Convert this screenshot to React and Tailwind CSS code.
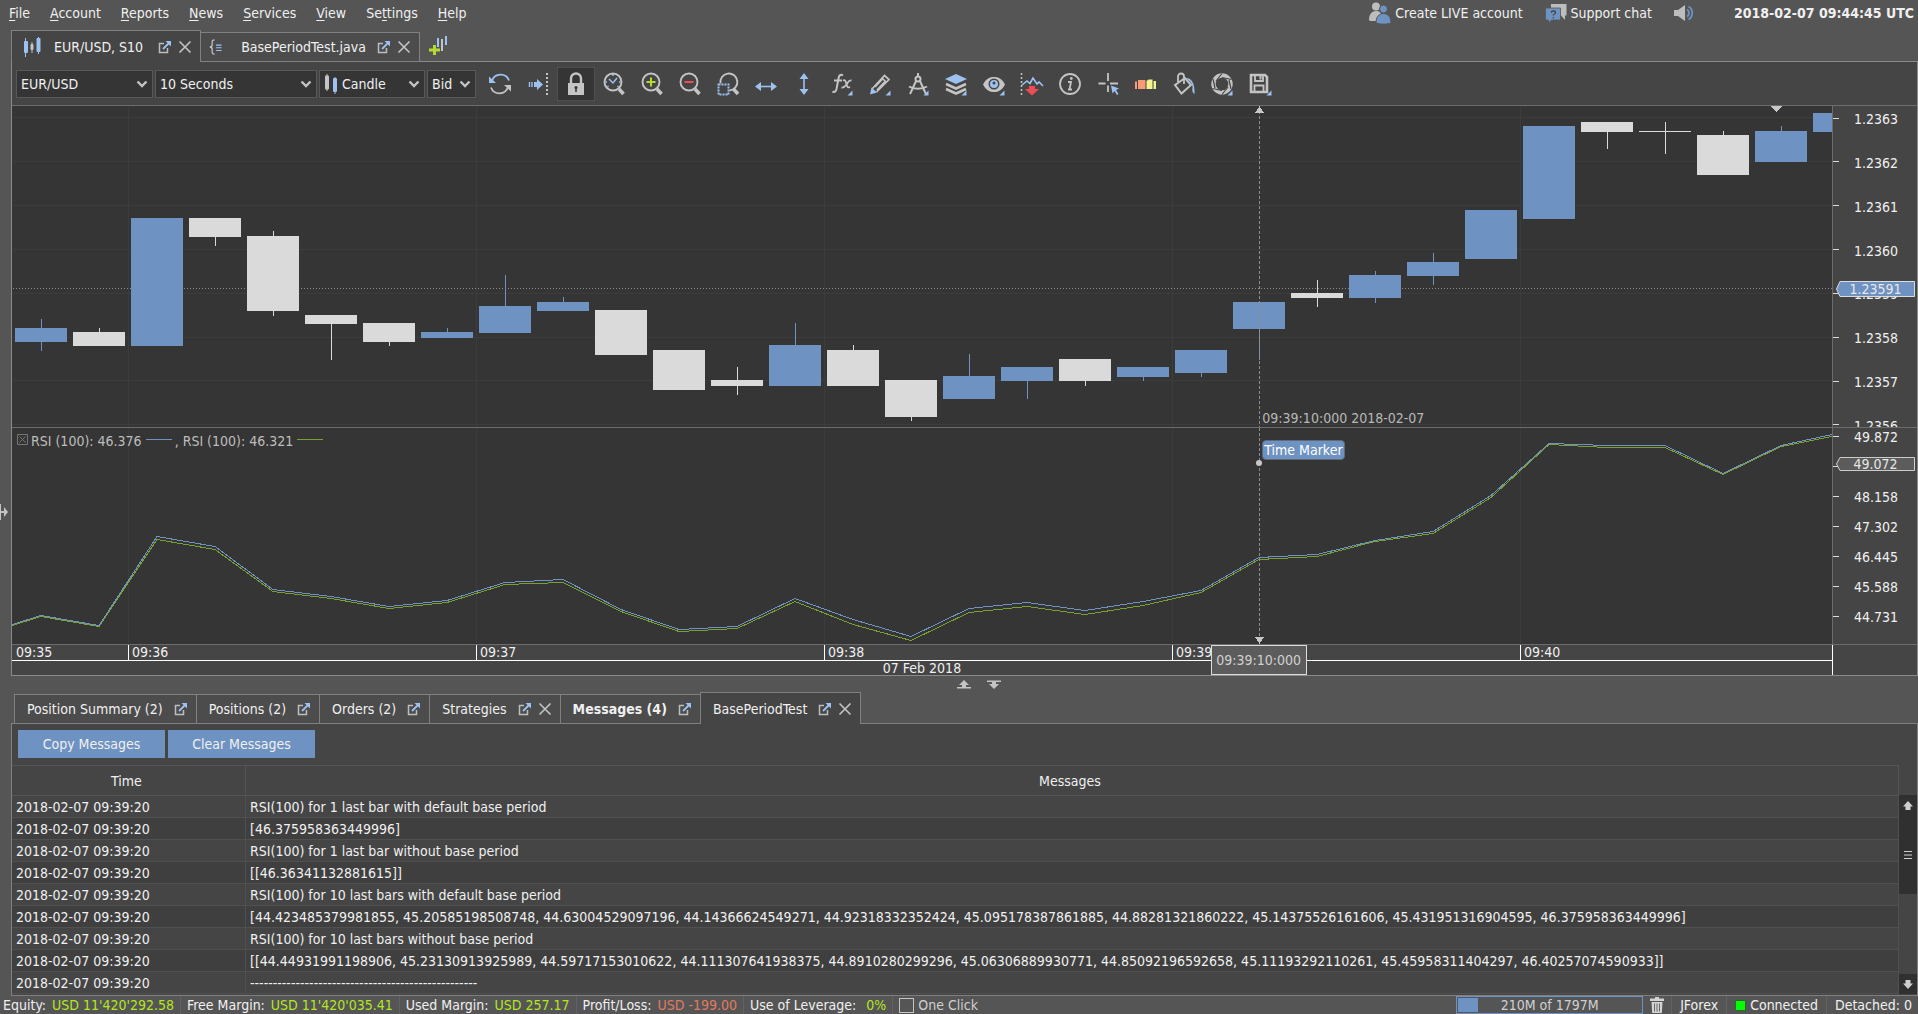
import { useState } from "react";
import { twMerge } from "tailwind-merge";

const BLUE = "#9dc1f0";
const GRAY = "#c4c4c4";

const menuItems = [
    ["", "F", "ile"],
    ["", "A", "ccount"],
    ["", "R", "eports"],
    ["", "N", "ews"],
    ["", "S", "ervices"],
    ["", "V", "iew"],
    ["Se", "t", "tings"],
    ["", "H", "elp"],
];

// [top, bottom, high, low, up]
const candles = [
    [222, 236, 213, 245, true],
    [226, 240, 222, 240, false],
    [112, 240, 112, 240, true],
    [112, 131, 112, 140, false],
    [130, 205, 125, 210, false],
    [209, 218, 209, 254, false],
    [217, 236, 217, 240, false],
    [226, 232, 222, 232, true],
    [200, 227, 169, 227, true],
    [196, 205, 191, 205, true],
    [204, 249, 204, 249, false],
    [244, 284, 244, 284, false],
    [274, 280, 261, 289, false],
    [239, 280, 217, 280, true],
    [244, 280, 239, 280, false],
    [274, 311, 274, 315, false],
    [270, 293, 248, 293, true],
    [261, 275, 261, 293, true],
    [253, 275, 253, 280, false],
    [261, 271, 261, 275, true],
    [244, 267, 244, 271, true],
    [196, 223, 196, 254, true],
    [187, 192, 174, 201, false],
    [169, 192, 165, 197, true],
    [156, 170, 147, 179, true],
    [104, 153, 104, 153, true],
    [20, 113, 20, 113, true],
    [16, 26, 16, 43, false],
    [25, 26, 16, 48, false],
    [29, 69, 25, 69, false],
    [25, 56, 20, 56, true],
    [7, 26, 7, 26, true],
];

const priceGrid = [11, 55, 99, 143, 187, 231, 274, 318];
const timeGrid = [116, 464, 812, 1160, 1508];
const prices = ["1.2363", "1.2362", "1.2361", "1.2360", "1.2359", "1.2358", "1.2357", "1.2356"];
// the second level sits behind the current value tag, only its tick is drawn
const rsiLevels = ["49.872", "", "48.158", "47.302", "46.445", "45.588", "44.731"];

const rsiWithBase = [
    196, 187, 197, 108, 118, 161, 168, 178, 172, 154, 151, 181, 201, 198, 170, 191, 208,
    180, 174, 182, 173, 162, 129, 126, 112, 103, 67, 15, 17, 17, 45, 17, 6,
];
const rsiWithoutBase = [
    197, 188, 198, 111, 121, 163, 170, 180, 174, 156, 154, 183, 203, 200, 173, 196, 212,
    184, 178, 186, 177, 164, 131, 128, 113, 105, 69, 16, 19, 19, 46, 18, 8,
];

const toPoints = (values) =>
    values
        .map((y, i) => {
            const x = i === 0 ? 0 : Math.min(1820, 29 + (i - 1) * 58);
            return `${x},${y + 0.5}`;
        })
        .join(" ");

const messages = [
    "RSI(100) for 1 last bar with default base period",
    "[46.375958363449996]",
    "RSI(100) for 1 last bar without base period",
    "[[46.36341132881615]]",
    "RSI(100) for 10 last bars with default base period",
    "[44.423485379981855, 45.20585198508748, 44.63004529097196, 44.14366624549271, 44.92318332352424, 45.095178387861885, 44.88281321860222, 45.14375526161606, 45.431951316904595, 46.375958363449996]",
    "RSI(100) for 10 last bars without base period",
    "[[44.44931991198906, 45.23130913925989, 44.59717153010622, 44.111307641938375, 44.8910280299296, 45.06306889930771, 44.85092196592658, 45.11193292110261, 45.45958311404297, 46.40257074590933]]",
    "--------------------------------------------------",
];

const Icon = ({ children, className }) => (
    <svg viewBox="0 0 24 24" fill="none" className={twMerge("size-6 shrink-0", className)} aria-hidden="true">
        {children}
    </svg>
);

const Corner = () => <path d="M22.500 18.500v5h-5z" fill={BLUE} />;

const Lens = ({ children }) => (
    <Icon>
        <circle cx="11" cy="10" r="8.500" stroke={GRAY} strokeWidth="1.900" />
        <path d="M17 17l4.500 5" stroke={GRAY} strokeWidth="3.500" />
        {children}
    </Icon>
);

const DetachIcon = () => (
    <svg viewBox="0 0 14 14" fill="none" className="size-3.5 shrink-0" aria-hidden="true">
        <path d="M6 3.500H1.500v9h8V8" stroke="#bdbdbd" strokeWidth="1.500" />
        <path d="M5 9l6-6" stroke={BLUE} strokeWidth="1.800" />
        <path d="M7.500 1h5.500v5.500z" fill={BLUE} />
    </svg>
);

const CloseIcon = () => (
    <svg viewBox="0 0 14 14" fill="none" className="size-3.5 shrink-0" aria-hidden="true">
        <path d="M1.500 1.500l11 11M12.500 1.500l-11 11" stroke="#c4c4c4" strokeWidth="1.600" />
    </svg>
);

const tools = [
    {
        name: "Refresh",
        icon: (
            <Icon>
                <path d="M4 9a9 9 0 0 1 17-.5" stroke={BLUE} strokeWidth="1.800" />
                <path d="M1 4.500v6.500h7z" fill={BLUE} />
                <path d="M20 15a9 9 0 0 1-17 .5" stroke={GRAY} strokeWidth="1.800" />
                <path d="M23 19.500v-6.500h-7z" fill={GRAY} />
            </Icon>
        ),
    },
    {
        name: "Auto shift",
        icon: (
            <Icon>
                <path d="M3.500 10v5M6 10v5" stroke={BLUE} strokeWidth="1.400" />
                <path d="M8 10h3V7l6 5.500-6 5.500v-3H8z" fill={BLUE} />
                <path d="M21 1v23" stroke={GRAY} strokeWidth="2" strokeDasharray="2 2" />
            </Icon>
        ),
    },
    {
        name: "Lock",
        icon: (
            <Icon>
                <path d="M7 12V6.500a5 5 0 0 1 10 0V12" stroke={GRAY} strokeWidth="2.400" />
                <path d="M4 11h16v12H4z" fill={GRAY} />
                <path d="M12 15v5" stroke="#353535" strokeWidth="1.500" />
                <circle cx="12" cy="15.500" r="1.500" fill="#353535" />
            </Icon>
        ),
    },
    {
        name: "Zoom to time",
        icon: (
            <Lens>
                <path d="M7 7l4 4 4-5M11 2v2M3.500 10H5M17 10h1.500M5.500 15l1-1M16.500 15l-1-1" stroke={BLUE} strokeWidth="1.500" />
            </Lens>
        ),
    },
    {
        name: "Zoom in",
        icon: (
            <Lens>
                <path d="M6.500 10h9M11 5.500v9" stroke="#b4d930" strokeWidth="2" />
            </Lens>
        ),
    },
    {
        name: "Zoom out",
        icon: (
            <Lens>
                <path d="M6.500 10h9" stroke="#f24b56" strokeWidth="2" />
            </Lens>
        ),
    },
    {
        name: "Zoom area",
        icon: (
            <Icon>
                <path d="M4.500 11.500a8.500 8.500 0 1 1 9 7" stroke={GRAY} strokeWidth="1.900" />
                <path d="M17.500 17l4.500 5" stroke={GRAY} strokeWidth="3.500" />
                <path d="M2.500 12.500h10v10h-10z" stroke={BLUE} strokeWidth="2" strokeDasharray="2 1" />
            </Icon>
        ),
    },
    {
        name: "Horizontal scale",
        icon: (
            <Icon>
                <path d="M5 14.500h14" stroke={BLUE} strokeWidth="1.600" />
                <path d="M1 14.500l6-4.500v9zM23 14.500l-6-4.500v9z" fill={BLUE} />
            </Icon>
        ),
    },
    {
        name: "Vertical scale",
        icon: (
            <Icon>
                <path d="M12 5v14" stroke={BLUE} strokeWidth="1.600" />
                <path d="M12 1L7.500 7h9zM12 23l-4.500-6h9z" fill={BLUE} />
            </Icon>
        ),
    },
    {
        name: "Indicators",
        icon: (
            <Icon>
                <path d="M13 3.500c-2-1.500-3.800-.5-4.300 2L6.500 17c-.6 2.500-2 3.500-4 2.500M4 8.500h8" stroke={GRAY} strokeWidth="2" />
                <path d="M13 8.500c3-1 2.500 1 3.500 4s1.500 3.500 3.500 2.500M21.500 8.500c-3-.5-3.500 2-5 4s-2.500 3.500-5 3" stroke={GRAY} strokeWidth="1.800" />
                <Corner />
            </Icon>
        ),
    },
    {
        name: "Draw",
        icon: (
            <Icon>
                <path d="M4 17L16.500 3.500l4.500 4L8.500 20M14 6l4.500 4.500M7 15l8-8.500M9 18l8.500-9" stroke={GRAY} strokeWidth="1.700" />
                <path d="M3.500 15.500l5.500 5-7 2z" fill={BLUE} />
                <Corner />
            </Icon>
        ),
    },
    {
        name: "Pattern tools",
        icon: (
            <Icon>
                <path d="M12 1v4M10.500 8L5 20l-1 2M13.500 8L19 20l1 2M3 14.500c5 3 13 3 18 0" stroke={GRAY} strokeWidth="2" />
                <circle cx="12" cy="7" r="2.500" stroke={GRAY} strokeWidth="2" />
                <Corner />
            </Icon>
        ),
    },
    {
        name: "Layers",
        icon: (
            <Icon>
                <path d="M12 2l11 5-11 5L1 7z" fill={BLUE} />
                <path d="M2 12l10 4.500L22 12M2 17l10 4.500L22 17" stroke={GRAY} strokeWidth="2.600" />
                <Corner />
            </Icon>
        ),
    },
    {
        name: "Visibility",
        icon: (
            <Icon>
                <path d="M1 12.500C4 6.500 8 5 12 5s8 1.500 11 7.500C20 18.500 16 20 12 20s-8-1.500-11-7.500z" fill={GRAY} />
                <circle cx="12" cy="12" r="5.500" fill="#454545" />
                <circle cx="12" cy="12" r="4" fill={BLUE} />
                <circle cx="12" cy="11" r="1.500" fill="#454545" />
                <Corner />
            </Icon>
        ),
    },
    {
        name: "Mark extremes",
        icon: (
            <Icon>
                <path d="M1.500 1v23" stroke={GRAY} strokeWidth="1.500" strokeDasharray="2 2" />
                <path d="M2 13l5-4 3 2.500L13 6l4 6 2-2 4 4" stroke={BLUE} strokeWidth="1.600" />
                <path d="M9 14h6v3h4l-7 6.500L5 17h4z" fill="#f24b56" />
            </Icon>
        ),
    },
    {
        name: "Information",
        icon: (
            <Icon>
                <circle cx="12" cy="12" r="10" stroke={GRAY} strokeWidth="1.800" />
                <path d="M10 10h3l-1.500 7.500H14M10 17.500h1.500" stroke={GRAY} strokeWidth="1.800" />
                <circle cx="13.300" cy="6.500" r="1.400" fill={GRAY} />
            </Icon>
        ),
    },
    {
        name: "Crosshair",
        icon: (
            <Icon>
                <path d="M12 1v8M12 13.500V20M2.500 11.500h7M14 11.500h8" stroke={GRAY} strokeWidth="1.800" />
                <path d="M15 13.500l8 3-3 1.500 2.500 4-1.500 1-2.500-4-2 2.500z" fill={BLUE} />
            </Icon>
        ),
    },
    {
        name: "Color scheme",
        icon: (
            <Icon>
                <path d="M1 9.500h2v7.500H1zM4 8h7.500v9H4z" fill="#f79a75" />
                <path d="M12.500 9l2-1.500h4V17h-6zM19.500 9H22v8h-2.500z" fill="#f2f58e" />
            </Icon>
        ),
    },
    {
        name: "Fill",
        icon: (
            <Icon>
                <path d="M3 13L13 6l6 7-9.500 8.500z" stroke={GRAY} strokeWidth="2" />
                <path d="M6 10V4.500a3 3 0 0 1 6 0V12" stroke={GRAY} strokeWidth="1.800" />
                <path d="M14 6c6 0 9 6 8.500 16-2-1-2.500-3-2-6s-2-7-6.500-10z" fill={BLUE} />
            </Icon>
        ),
    },
    {
        name: "Snapshot",
        icon: (
            <Icon>
                <circle cx="12" cy="12" r="8.500" stroke={GRAY} strokeWidth="4.400" />
                <path d="M12 1.500L6 9M21.500 7.500L12 5.500M21 17l-2-9M12 22.500l6-7.500M2.500 16.500l9.500 2M3 7l2 9" stroke="#454545" strokeWidth="1.200" />
                <Corner />
            </Icon>
        ),
    },
    {
        name: "Save",
        icon: (
            <Icon>
                <path d="M3 3h14l2 2v15H3z" stroke={GRAY} strokeWidth="2.600" />
                <path d="M7 3v6h8V3M6.500 20v-6.500h9V20" stroke={GRAY} strokeWidth="1.800" />
                <path d="M11.500 4h2v3.500h-2z" fill={GRAY} />
                <path d="M23.500 18.500v5h-5z" fill={BLUE} />
            </Icon>
        ),
    },
];

const ToolbarSelect = ({ label, options, className, icon }) => (
    <div
        className={twMerge(
            "relative flex h-7 items-center border border-[#595959] bg-[#353535] text-[#f0f0f0]",
            className
        )}
    >
        {icon}
        <select
            aria-label={label}
            className="h-full w-full min-w-0 appearance-none bg-transparent pl-1 pr-4 outline-none"
        >
            {options.map((option) => (
                <option key={option}>{option}</option>
            ))}
        </select>
        <svg viewBox="0 0 12 8" fill="none" className="pointer-events-none absolute right-1 h-2 w-3" aria-hidden="true">
            <path d="M1.500 1.500L6 6l4.500-4.500" stroke="#c4c4c4" strokeWidth="2.400" />
        </svg>
    </div>
);

const Tab = ({ active, bold, closable, icon, label, className }) => (
    <div
        className={twMerge(
            "flex shrink-0 items-center whitespace-nowrap border border-[#808080] pl-3 pr-2",
            active ? "h-8 border-b-0 bg-[#454545]" : "h-[30px] border-l-0 bg-[#4c4c4c]",
            className
        )}
    >
        {icon}
        <button type="button" className={twMerge("mr-[11px]", bold && "font-bold")}>
            {label}
        </button>
        <button type="button" aria-label={`Detach ${label}`} className="ml-auto">
            <DetachIcon />
        </button>
        {closable && (
            <button type="button" aria-label={`Close ${label}`} className="ml-[6px]">
                <CloseIcon />
            </button>
        )}
    </div>
);

const MenuBar = () => (
    <header className="flex h-[30px] shrink-0 items-center justify-between pl-[9px] pr-1 pb-1">
        <nav className="flex gap-5">
            {menuItems.map(([before, key, after]) => (
                <button type="button" key={before + key + after}>
                    {before}
                    <u className="underline-offset-2">{key}</u>
                    {after}
                </button>
            ))}
        </nav>
        <div className="flex items-center">
            <button type="button" className="flex items-center gap-1">
                <svg viewBox="0 0 22 22" className="size-[22px]" aria-hidden="true">
                    <circle cx="7" cy="4.500" r="4" fill="#bdbdbd" />
                    <path d="M0 18c0-6 3-9 7-9 3 0 5 1 5 4l-4 6H1z" fill="#bdbdbd" />
                    <circle cx="14.500" cy="7" r="4" fill="#6e92c1" stroke="#555" />
                    <path d="M7 21c0-6 3-9.500 7.500-9.500S22 15 22 21c-3 1.500-12 1.500-15 0z" fill="#6e92c1" stroke="#555" />
                </svg>
                Create LIVE account
            </button>
            <button type="button" className="ml-[22px] flex items-center gap-1">
                <svg viewBox="0 0 22 20" className="h-5 w-[22px]" aria-hidden="true">
                    <path d="M6 1h15.500v11.500H20V17l-4-4.500H6z" fill="#bdbdbd" />
                    <path d="M.5 5h15v12H6.500L3.500 20v-3h-3z" fill="#6e92c1" stroke="#555" strokeWidth=".8" />
                    <path d="M6 9.500c.5-2 4.500-2 4.500 0 0 1.500-2.200 1.500-2.200 3M8.300 14v1.200" stroke="#454545" strokeWidth="1.300" fill="none" />
                </svg>
                Support chat
            </button>
            <button type="button" aria-label="Sound" className="ml-[22px]">
                <svg viewBox="0 0 20 18" fill="none" className="h-[18px] w-5" aria-hidden="true">
                    <path d="M0 6h4l7-5v16l-7-5H0z" fill="#bdbdbd" />
                    <path d="M13 5.500a4 4 0 0 1 0 7M14.500 2.500a7.500 7.500 0 0 1 0 13" stroke="#6e92c1" strokeWidth="1.800" />
                </svg>
            </button>
            <time className="ml-10 font-bold">2018-02-07 09:44:45 UTC</time>
        </div>
    </header>
);

const Toolbar = () => (
    <div className="flex h-[43px] shrink-0 items-center gap-[2px] pl-1">
        <ToolbarSelect label="Instrument" options={["EUR/USD"]} className="w-[137px]" />
        <ToolbarSelect label="Period" options={["10 Seconds"]} className="w-[162px]" />
        <ToolbarSelect
            label="Chart type"
            options={["Candle"]}
            className="w-[106px]"
            icon={
                <svg viewBox="0 0 14 20" className="ml-1 h-5 w-3.5 shrink-0" aria-hidden="true">
                    <path d="M3 0v17" stroke={GRAY} strokeWidth="1" />
                    <rect x="1" y="1.500" width="4" height="14" rx="1" fill={GRAY} />
                    <path d="M11 3v17" stroke={BLUE} strokeWidth="1" />
                    <rect x="9" y="4" width="4" height="14" rx="1" fill={BLUE} />
                </svg>
            }
        />
        <ToolbarSelect label="Side" options={["Bid"]} className="w-[49px]" />
        <div className="ml-[3px] flex items-center">
            {tools.map((tool) => (
                <button
                    type="button"
                    key={tool.name}
                    aria-label={tool.name}
                    className={twMerge(
                        "flex h-[34px] w-[38px] items-center justify-center border border-transparent",
                        tool.name === "Lock" && "border-[#505050] bg-[#353535]"
                    )}
                >
                    {tool.icon}
                </button>
            ))}
        </div>
    </div>
);

const ValueTag = ({ value, className, fill }) => (
    <div className={twMerge("absolute left-[3px] flex w-[79px] items-center justify-center text-[#e8e8e8]", className)}>
        <svg viewBox="0 0 79 16" preserveAspectRatio="none" className="absolute inset-0 h-full w-full" aria-hidden="true">
            <path d="M4 .5h74.500v15H4L.5 8z" fill={fill} stroke="#dcdcdc" />
        </svg>
        <span className="relative">{value}</span>
    </div>
);

const AxisLabel = ({ value }) => (
    <li className="flex h-0 items-center">
        <span className="h-px w-[6px] bg-[#dcdcdc]" />
        {value && <span className="ml-[15px] pt-[2px]">{value}</span>}
    </li>
);

const PricePanel = () => (
    <div className="flex min-h-0 grow-[321] basis-0">
        <div className="relative min-w-0 flex-1 overflow-hidden bg-[#353535]">
            <svg viewBox="0 0 1820 321" preserveAspectRatio="none" className="block h-full w-full" shapeRendering="crispEdges">
                {priceGrid.map((y) => (
                    <rect key={y} x="0" y={y} width="1820" height="1" fill="#3c3c3c" />
                ))}
                {timeGrid.map((x) => (
                    <rect key={x} x={x} y="0" width="1" height="321" fill="#3c3c3c" />
                ))}
                <path d="M1 182.500h1819" stroke="#8c8c8c" strokeDasharray="1 2" />
                {candles.map(([top, bottom, high, low, up], i) => {
                    const color = up ? "#6e92c1" : "#dadada";
                    return (
                        <g key={i} fill={color}>
                            <rect x={29 + i * 58} y={high} width="1" height={low - high} />
                            <rect x={3 + i * 58} y={top} width="52" height={bottom - top} />
                        </g>
                    );
                })}
                <path d="M1247.500 0v321" stroke="#8c8c8c" strokeDasharray="3 2" />
                <path d="M1247.500 0l4.500 7h-9zM1758 0h12l-6 6z" fill="#c8c8c8" />
            </svg>
            <span className="absolute bottom-0 left-[68.7%] whitespace-nowrap text-[#b8b8b8]">09:39:10:000 2018-02-07</span>
        </div>
        <div className="relative w-[85px] border-l border-[#6c6c6c]">
            <ol className="flex h-full flex-col justify-between overflow-hidden pt-[12px] pb-[2px]">
                {prices.map((price) => (
                    <AxisLabel key={price} value={price} />
                ))}
            </ol>
            <ValueTag value="1.23591" fill="#6e92c1" className="top-[54.5%] h-4" />
        </div>
    </div>
);

const Legend = () => (
    <div className="absolute left-[5px] top-1 flex items-center whitespace-nowrap text-[#bdbdbd]">
        <button type="button" aria-label="Remove indicator" className="mr-[3px] mb-1">
            <svg viewBox="0 0 11 11" fill="none" className="size-[11px]" aria-hidden="true">
                <path d="M.5.500h10v10H.5zM2.500 2.500l6 6M8.500 2.500l-6 6" stroke="#757575" />
            </svg>
        </button>
        <span>RSI (100): 46.376</span>
        <span className="ml-1 mb-1 h-px w-[26px] bg-[#6e92c1]" />
        <span className="ml-[3px]">, RSI (100): 46.321</span>
        <span className="ml-1 mb-1 h-px w-[26px] bg-[#7ba032]" />
    </div>
);

const RsiPanel = () => (
    <div className="flex min-h-0 grow-[216] basis-0">
        <div className="relative min-w-0 flex-1 overflow-hidden bg-[#353535]">
            <svg viewBox="0 0 1820 216" preserveAspectRatio="none" className="block h-full w-full" shapeRendering="crispEdges">
                {timeGrid.map((x) => (
                    <rect key={x} x={x} y="0" width="1" height="216" fill="#3c3c3c" />
                ))}
                <polyline points={toPoints(rsiWithoutBase)} fill="none" stroke="#7ba032" />
                <polyline points={toPoints(rsiWithBase)} fill="none" stroke="#6e92c1" />
                <path d="M1247.500 0v209" stroke="#8c8c8c" strokeDasharray="3 2" />
                <path d="M1247.500 216l4.500-7h-9z" fill="#c8c8c8" />
                <circle cx="1247" cy="35" r="3" fill="#c8c8c8" shapeRendering="auto" />
            </svg>
            <Legend />
            <span className="absolute left-[68.7%] top-3 rounded-sm border border-[#5f6a78] bg-[#6e92c1] px-px text-white">
                Time Marker
            </span>
        </div>
        <div className="relative w-[85px] border-l border-[#6c6c6c]">
            <ol className="flex h-full flex-col justify-between overflow-hidden pt-[8px] pb-[28px]">
                {rsiLevels.map((level) => (
                    <AxisLabel key={level} value={level} />
                ))}
            </ol>
            <ValueTag value="49.072" fill="#5c5c5c" className="top-[13.5%] h-3.5" />
        </div>
    </div>
);

const TimeAxis = () => (
    <div className="flex shrink-0 border-t border-[#6c6c6c]">
        <div className="relative min-w-0 flex-1">
            <ol className="grid h-4 grid-cols-[116fr_348fr_348fr_348fr_348fr_312fr] border-b border-white leading-[15px]">
                <li className="pl-1">09:35</li>
                <li className="border-l border-white pl-[3px]">09:36</li>
                <li className="border-l border-white pl-[3px]">09:37</li>
                <li className="border-l border-white pl-[3px]">09:38</li>
                <li className="border-l border-white pl-[3px]">09:39</li>
                <li className="border-l border-white pl-[3px]">09:40</li>
            </ol>
            <div className="h-[14px] text-center leading-[14px]">07 Feb 2018</div>
            <span className="absolute left-[68.5%] top-0 flex h-[30px] w-24 -translate-x-1/2 items-center justify-center border border-[#dcdcdc] bg-[#5c5c5c] text-[#d0d0d0]">
                09:39:10:000
            </span>
        </div>
        <div className="w-[85px] border-l border-white" />
    </div>
);

const ChartSection = () => (
    <section className="flex min-h-0 flex-1 flex-col">
        <div className="relative z-10 -mb-px ml-[11px] flex items-end">
            <Tab
                active
                closable
                label="EUR/USD, S10"
                className="w-[190px]"
                icon={
                    <svg viewBox="0 0 18 20" className="-ml-px mr-[13px] h-5 w-[18px]" aria-hidden="true">
                        <path d="M2.500 1v19" stroke={BLUE} />
                        <rect x="1" y="4" width="4" height="12" rx="1" fill={BLUE} />
                        <path d="M9 5v11" stroke={GRAY} />
                        <rect x="7.500" y="7" width="3" height="6" rx="1" fill={GRAY} />
                        <path d="M15.500 0v17" stroke={BLUE} />
                        <rect x="13.500" y="1" width="4" height="14" rx="1" fill={BLUE} />
                    </svg>
                }
            />
            <Tab
                closable
                label="BasePeriodTest.java"
                className="w-[219px] pl-2"
                icon={
                    <svg viewBox="0 0 18 20" fill="none" className="mr-[18px] h-5 w-[18px]" aria-hidden="true">
                        <path d="M7 1C4 1 4 2 4 4v3c0 2-1 3-3 3 2 0 3 1 3 3v3c0 2 0 3 3 3" stroke={GRAY} strokeWidth="1.600" />
                        <path d="M9 7.500h7M9 11h7M9 14.500h7" stroke={BLUE} strokeWidth="1.500" />
                    </svg>
                }
            />
            <button type="button" aria-label="Add chart" className="ml-2 mb-[6px]">
                <svg viewBox="0 0 20 20" fill="none" className="size-5" aria-hidden="true">
                    <path d="M10 2v9M18 0v9" stroke={BLUE} strokeWidth="2" />
                    <path d="M14 3v12" stroke={GRAY} strokeWidth="2" />
                    <path d="M1 14h11M6.500 9v10" stroke="#b4d930" strokeWidth="3" />
                </svg>
            </button>
        </div>
        <div className="flex min-h-0 flex-1">
            <div className="flex w-[11px] shrink-0 items-end pb-[156px]">
                <svg viewBox="0 0 8 16" className="h-4 w-2" aria-hidden="true">
                    <path d="M0 0h1v16H0zM0 7h4V3l4 5-4 5V9H0z" fill="#c4c4c4" />
                </svg>
            </div>
            <div className="flex min-w-0 flex-1 flex-col border border-[#8a8a8a] bg-[#454545]">
                <Toolbar />
                <div className="flex min-h-0 flex-1 flex-col border-t border-[#6c6c6c]">
                    <PricePanel />
                    <div className="h-px shrink-0 bg-[#6c6c6c]" />
                    <RsiPanel />
                    <TimeAxis />
                </div>
            </div>
        </div>
    </section>
);

const Splitter = () => (
    <div className="flex h-4 shrink-0 items-center justify-center gap-4 pl-10">
        <svg viewBox="0 0 14 9" className="h-[9px] w-3.5" aria-hidden="true">
            <path d="M7 0l5 5H9v2h5v1.500H0V7h5V5H2z" fill="#c4c4c4" />
        </svg>
        <svg viewBox="0 0 14 9" className="h-[9px] w-3.5" aria-hidden="true">
            <path d="M7 9l5-5H9V2h5V.5H0V2h5v2H2z" fill="#c4c4c4" />
        </svg>
    </div>
);

const ScrollBar = () => (
    <div className="mt-[30px] flex w-[18px] shrink-0 flex-col justify-between">
        <div className="flex h-[99px] flex-col items-center bg-[#303030] pt-[6px]">
            <svg viewBox="0 0 10 9" className="h-[9px] w-2.5" aria-hidden="true">
                <path d="M5 0l5 5.500H7.500V9h-5V5.500H0z" fill="#cfcfcf" />
            </svg>
            <svg viewBox="0 0 8 8" className="mt-[41px] size-2" aria-hidden="true">
                <path d="M0 .5h8M0 4h8M0 7.500h8" stroke="#cfcfcf" />
            </svg>
        </div>
        <div className="flex h-5 items-center justify-center bg-[#303030]">
            <svg viewBox="0 0 10 9" className="h-[9px] w-2.5" aria-hidden="true">
                <path d="M5 9l5-5.500H7.500V0h-5v3.500H0z" fill="#cfcfcf" />
            </svg>
        </div>
    </div>
);

const MessagesSection = () => (
    <section className="ml-[11px] shrink-0">
        <div className="relative z-10 -mb-px ml-[3px] flex items-end">
            <Tab label="Position Summary (2)" className="border-l" />
            <Tab label="Positions (2)" />
            <Tab label="Orders (2)" />
            <Tab label="Strategies" closable />
            <Tab label="Messages (4)" bold className="border-r-0" />
            <Tab label="BasePeriodTest" active closable />
        </div>
        <div className="border border-[#808080] bg-[#454545] pb-px">
            <div className="flex h-[41px] gap-[3px] pl-[6px] pt-[6px]">
                <button type="button" className="h-7 w-[147px] bg-[#6e92c1] text-[#f0f0f0]">
                    Copy Messages
                </button>
                <button type="button" className="h-7 w-[147px] bg-[#6e92c1] text-[#f0f0f0]">
                    Clear Messages
                </button>
            </div>
            <div className="flex">
                <table className="min-w-0 flex-1 table-fixed border-separate border-spacing-0 whitespace-nowrap">
                    <colgroup>
                        <col className="w-[234px]" />
                        <col />
                    </colgroup>
                    <thead>
                        <tr className="h-[31px]">
                            <th className="border-y border-r border-[#555] py-0 pl-0 pr-1 font-normal">Time</th>
                            <th className="border-y border-r border-[#555] py-0 pl-0 pr-1 font-normal">Messages</th>
                        </tr>
                    </thead>
                    <tbody>
                        {messages.map((message, i) => (
                            <tr key={i} className="h-[22px] odd:bg-[#454545] even:bg-[#3f3f3f]">
                                <td className="border-b border-r border-[#505050] p-0 pl-1">2018-02-07 09:39:20</td>
                                <td className="overflow-hidden border-b border-r border-[#505050] p-0 pl-1">{message}</td>
                            </tr>
                        ))}
                    </tbody>
                </table>
                <ScrollBar />
            </div>
        </div>
    </section>
);

const StatusItem = ({ label, value, className }) => (
    <div className="mr-[6px] flex h-full items-center gap-[6px] border-r border-[#626262] pr-[6px]">
        <span>{label}</span>
        <span className={className}>{value}</span>
    </div>
);

const StatusBar = () => {
    const [oneClick, setOneClick] = useState(false);

    return (
        <footer className="flex h-[18px] shrink-0 items-center justify-between whitespace-nowrap pl-[3px] pr-[6px]">
            <div className="flex h-full items-center">
                <StatusItem label="Equity:" value="USD 11'420'292.58" className="text-[#b4e61e]" />
                <StatusItem label="Free Margin:" value="USD 11'420'035.41" className="text-[#b4e61e]" />
                <StatusItem label="Used Margin:" value="USD 257.17" className="text-[#b4e61e]" />
                <StatusItem label="Profit/Loss:" value="USD -199.00" className="text-[#e07a60]" />
                <StatusItem label="Use of Leverage:" value="0%" className="pl-1 text-[#b4e61e]" />
                <label className="flex items-center gap-1 text-[#cfcfcf]">
                    <input
                        type="checkbox"
                        checked={oneClick}
                        onChange={(e) => setOneClick(e.target.checked)}
                        className="size-[15px] appearance-none border border-[#c4c4c4] checked:bg-[#6e92c1]"
                    />
                    One Click
                </label>
            </div>
            <div className="flex h-full items-center">
                <div className="relative flex h-full w-[187px] items-center justify-center border border-[#6e92c1] text-[#d0d0d0]">
                    <div className="absolute inset-y-px left-px w-[11%] bg-[#6e92c1]" />
                    <span className="relative">210M of 1797M</span>
                </div>
                <button type="button" aria-label="Collect garbage" className="mx-[7px]">
                    <svg viewBox="0 0 14 16" className="h-4 w-3.5" aria-hidden="true">
                        <path d="M5 0h4v1.500h5V4H0V1.500h5zM1.500 5h11l-.7 11H2.200z" fill="#d4d4d4" />
                        <path d="M4.500 6.500v8M7 6.500v8M9.500 6.500v8" stroke="#666" />
                    </svg>
                </button>
                <div className="flex h-full items-center border-x border-[#626262] px-2">JForex</div>
                <div className="flex h-full items-center gap-1 border-r border-[#626262] px-2">
                    <span className="size-[11px] border border-[#2c6b2c] bg-[#00ff00]" />
                    Connected
                </div>
                <span className="pl-2">Detached: 0</span>
            </div>
        </footer>
    );
};

const App = () => (
    <div className="flex h-screen flex-col overflow-hidden bg-[#555] font-['DejaVu_Sans_Condensed','DejaVu_Sans',sans-serif] text-[14px] leading-[18px] text-[#f0f0f0]">
        <MenuBar />
        <ChartSection />
        <Splitter />
        <MessagesSection />
        <StatusBar />
    </div>
);

export default App;
